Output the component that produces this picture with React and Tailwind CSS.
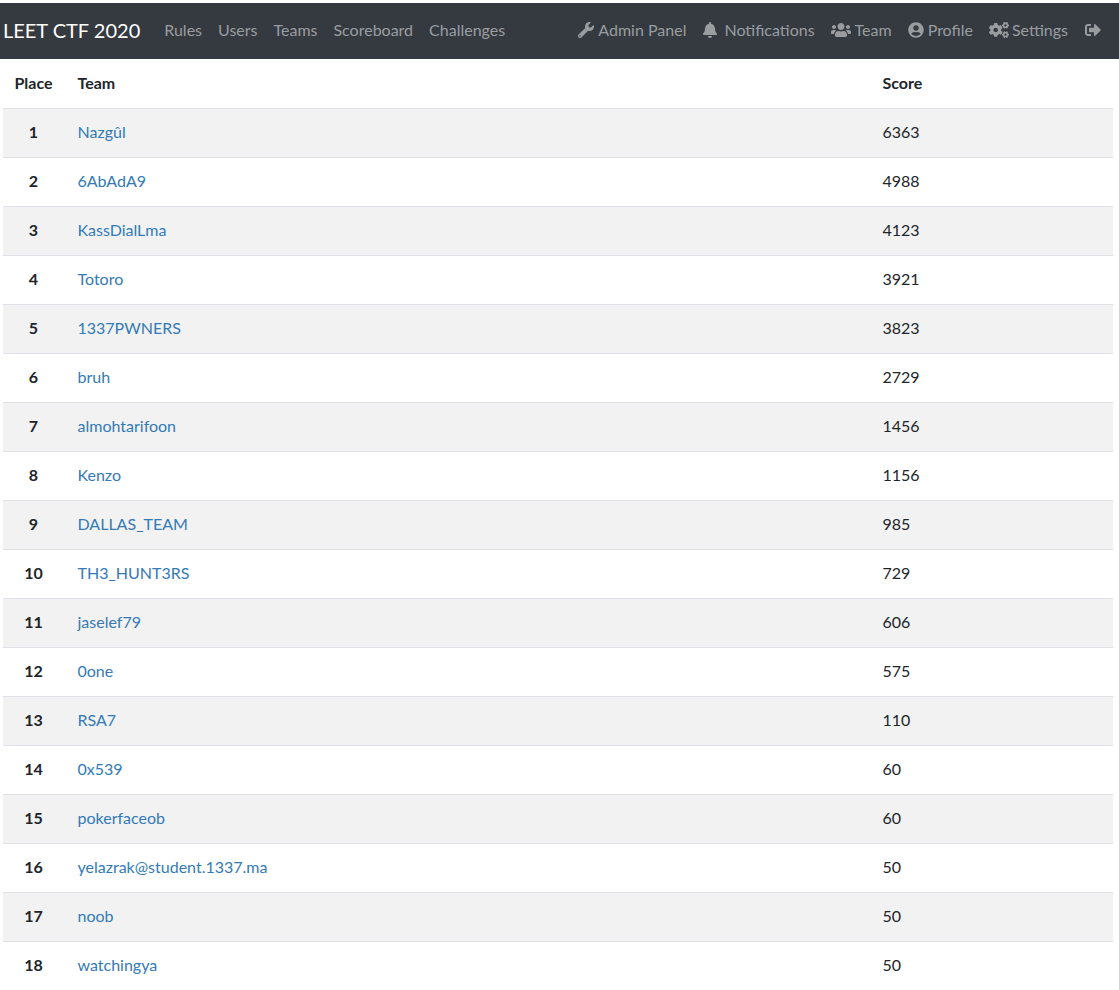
import React from 'react';
import { FaWrench, FaBell, FaUsers, FaUserCircle, FaCogs, FaSignOutAlt } from 'react-icons/fa';

const links = ['Rules', 'Users', 'Teams', 'Scoreboard', 'Challenges'];

const rightLinks = [
  { label: 'Admin Panel', icon: FaWrench, iconClass: 'w-[16px] h-[16px] mr-[4px]' },
  { label: 'Notifications', icon: FaBell, iconClass: 'w-[16px] h-[16px] mr-[6px]' },
  { label: 'Team', icon: FaUsers, iconClass: 'w-[20px] h-[16px] mr-[4px]' },
  { label: 'Profile', icon: FaUserCircle, iconClass: 'w-[16px] h-[16px] mr-[4px]' },
  { label: 'Settings', icon: FaCogs, iconClass: 'w-[20px] h-[16px] mr-[3px]' },
];

const teams = [
  ['Nazgûl', 6363],
  ['6AbAdA9', 4988],
  ['KassDialLma', 4123],
  ['Totoro', 3921],
  ['1337PWNERS', 3823],
  ['bruh', 2729],
  ['almohtarifoon', 1456],
  ['Kenzo', 1156],
  ['DALLAS_TEAM', 985],
  ['TH3_HUNT3RS', 729],
  ['jaselef79', 606],
  ['0one', 575],
  ['RSA7', 110],
  ['0x539', 60],
  ['pokerfaceob', 60],
  ['yelazrak@student.1337.ma', 50],
  ['noob', 50],
  ['watchingya', 50],
];

export default function App() {
  return (
    <div className="h-[990px] overflow-hidden bg-white pt-[3px] font-['Lato','Open_Sans',sans-serif] text-[16px] text-[#212529]">
      {/* Navbar */}
      <nav className="flex h-[56px] items-center bg-[#343a40] pb-[2px] pl-[3px] pr-[18px]">
        <a className="mr-[24px] text-[20px] text-white">LEET CTF 2020</a>
        <div className="flex gap-[16px] text-[#9a9da0]">
          {links.map(l => <a key={l}>{l}</a>)}
        </div>
        <div className="ml-auto flex items-center gap-[16px] text-[#9a9da0]">
          {rightLinks.map(({ label, icon: Icon, iconClass }) => (
            <a key={label} className="flex items-center">
              <Icon className={iconClass} />
              {label}
            </a>
          ))}
          <FaSignOutAlt className="ml-[1px] size-[16px]" />
        </div>
      </nav>

      {/* Scoreboard table */}
      <div className="pl-[3px] pr-[6px]">
        <table className="w-full table-fixed border-collapse">
          <thead>
            <tr className="h-[49px] border-b border-[#dee2e6] text-left">
              <th className="w-[61px] text-center font-bold">Place</th>
              <th className="w-[805px] pl-[13.5px] font-bold">Team</th>
              <th className="pl-[13.5px] font-bold">Score</th>
            </tr>
          </thead>
          <tbody>
            {teams.map(([name, score], i) => (
              <tr key={name} className={`h-[49px] border-b border-[#dee2e6] last:border-b-0 ${i % 2 === 0 ? 'bg-[#f2f2f2]' : ''}`}>
                <td className="pb-[2px] text-center font-bold">{i + 1}</td>
                <td className="pb-[2px] pl-[13.5px] text-[#337ab7]">{name}</td>
                <td className="pb-[2px] pl-[13.5px]">{score}</td>
              </tr>
            ))}
          </tbody>
        </table>
      </div>
    </div>
  );
}
